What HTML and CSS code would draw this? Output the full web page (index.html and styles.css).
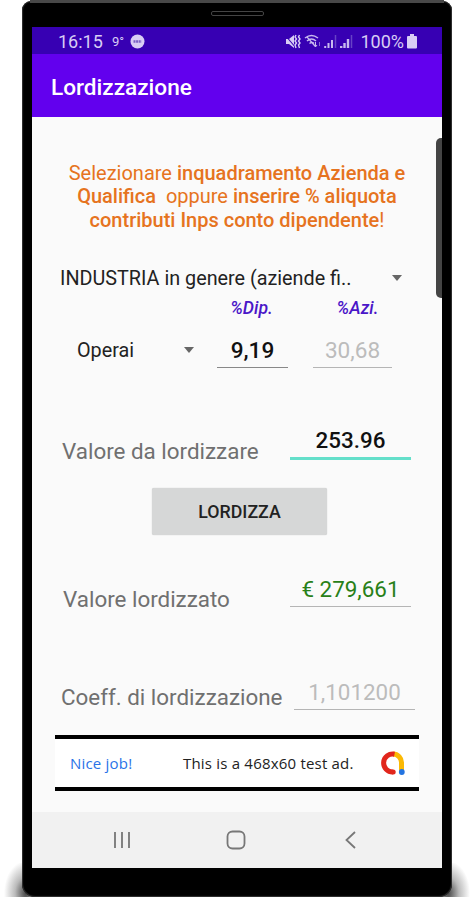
FILE: index.html
```html
<!DOCTYPE html>
<html lang="it">
<head>
<meta charset="UTF-8">
<meta name="viewport" content="width=device-width, initial-scale=1.0">
<title>Lordizzazione</title>
<link rel="stylesheet" href="styles.css">
</head>
<body>

<div class="phone">
  <div class="speaker"></div>
  <div class="side-panel"></div>
  <div class="screen">

    <!-- Barra di stato -->
    <div class="status-bar">
      <span class="time">16:15</span>
      <span class="temp">9°</span>
      <svg class="badge" width="15" height="15" viewBox="0 0 15 15">
        <circle cx="7.5" cy="7.5" r="7" fill="#d8cdf5"/>
        <path d="M3.5 7.5h8" stroke="#7960c5" stroke-width="2.4" stroke-dasharray="2 .6"/>
      </svg>
      <div class="status-icons">
        <svg width="16" height="15" viewBox="0 0 16 15">
          <path d="M1 5h3l5-4v13l-5-4H1z" fill="#d8cdf5"/>
          <path d="M0 1l11 13" stroke="#3700b3" stroke-width="1.1"/>
          <path d="M11 1l-1 2 1.5 2-1.5 2 1.5 2-1.5 2 1 3M14.5 1l-1 2 1.5 2-1.5 2 1.5 2-1.5 2 1 3" fill="none" stroke="#d8cdf5" stroke-width="1.4"/>
        </svg>
        <svg width="17" height="15" viewBox="0 0 17 15">
          <path d="M1 4Q7.5-1 14 4M3 7Q7.5 3 12 7M5.5 9.5Q8 7.5 10 9.5" fill="none" stroke="#c8b9ef" stroke-width="1.5"/>
          <path d="M3 3l8 9" stroke="#c8b9ef" stroke-width="1.2"/>
          <path d="M11.5 8v5m-1.5-2l1.5 2 1.5-2" fill="none" stroke="#c8b9ef"/>
          <path d="M15.5 12V8" stroke="#8a6dd6"/>
        </svg>
        <svg width="13" height="15" viewBox="0 0 13 15">
          <path d="M1.2 12v2M4.5 9v5M8 6v8" stroke="#c8b9ef" stroke-width="2"/>
          <path d="M11.5 1v13" stroke="#6742c6" stroke-width="1.5"/>
        </svg>
        <svg width="13" height="15" viewBox="0 0 13 15">
          <path d="M1.2 12v2M4.5 9v5M8 5v9" stroke="#c8b9ef" stroke-width="2.4"/>
          <path d="M11.5 1v13" stroke="#6742c6" stroke-width="1.5"/>
        </svg>
        <span class="battery-text">100%</span>
        <svg width="10" height="15" viewBox="0 0 10 15">
          <path d="M3 0h4v2h2q1 0 1 1v10.5q0 1-1 1H1q-1 0-1-1V3q0-1 1-1h2z" fill="#d8cdf5"/>
        </svg>
      </div>
    </div>

    <div class="app-bar"><span class="app-title">Lordizzazione</span></div>

    <div class="content">
      <div class="notice">
        <div>Selezionare <b>inquadramento Azienda e</b></div>
        <div><b>Qualifica</b>&nbsp; oppure <b>inserire % aliquota</b></div>
        <div><b>contributi Inps conto dipendente</b>!</div>
      </div>

      <div class="spinner sector">
        <span>INDUSTRIA in genere (aziende fi..</span>
        <span class="arrow"></span>
      </div>

      <div class="rates">
        <div class="spinner role">
          <span>Operai</span>
          <span class="arrow"></span>
        </div>
        <div class="rate dip">
          <span class="rate-label">%Dip.</span>
          <div class="field">9,19</div>
        </div>
        <div class="rate azi">
          <span class="rate-label">%Azi.</span>
          <div class="field">30,68</div>
        </div>
      </div>

      <div class="row amount">
        <span class="label">Valore da lordizzare</span>
        <div class="field">253.96</div>
      </div>

      <button class="submit-btn">LORDIZZA</button>

      <div class="row result">
        <span class="label">Valore lordizzato</span>
        <div class="field">€ 279,661</div>
      </div>

      <div class="row coeff">
        <span class="label">Coeff. di lordizzazione</span>
        <div class="field">1,101200</div>
      </div>

      <!-- Banner pubblicitario -->
      <div class="ad">
        <span class="ad-job">Nice job!</span>
        <span class="ad-text">This is a 468x60 test ad.</span>
        <svg class="ad-logo" width="26" height="26" viewBox="0 0 26 26" fill="none">
          <path d="M13 4a8.5 8.5 0 0 1 8.5 9v8" stroke="#fbb904" stroke-width="5"/>
          <path d="M14.5 4.2A9 9 0 1 0 13 22" stroke="#e1261c" stroke-width="5"/>
          <circle cx="13.2" cy="22" r="2.5" fill="#e1261c"/>
          <circle cx="21.8" cy="22" r="2.9" fill="#2374e1"/>
        </svg>
      </div>
    </div>

    <div class="nav-bar">
      <svg width="18" height="18" viewBox="0 0 18 18">
        <path d="M2 1v16M9 1v16M16 1v16" stroke="#777" stroke-width="1.8"/>
      </svg>
      <svg class="home" width="20" height="20" viewBox="0 0 20 20">
        <rect x="1.5" y="1.5" width="17" height="17" rx="5" fill="none" stroke="#777" stroke-width="1.8"/>
      </svg>
      <svg width="12" height="18" viewBox="0 0 12 18">
        <path d="M11 1L2.5 9l8.5 8" fill="none" stroke="#777" stroke-width="1.8"/>
      </svg>
    </div>
  </div>
</div>

</body>
</html>
```

FILE: styles.css
```css
* {
  box-sizing: border-box;
}
body {
  margin: 0;
  width: 473px;
  height: 900px;
  overflow: hidden;
  background-color: #fff;
  font-family: Roboto, "Liberation Sans", sans-serif;
  color: #222;
}
span {
  white-space: nowrap;
}
.phone {
  position: relative;
  width: 430px;
  height: 896px;
  margin: 1px 0 0 22px;
  padding: 26px 10px 0;
  background-color: #000;
  border-radius: 9px 9px 13px 13px;
  box-shadow: inset 0 0 1px 1px #333;
}
/* bordo superiore del telefono */
.phone::before {
  content: "";
  position: absolute;
  left: 8px;
  right: 8px;
  top: -1px;
  height: 3px;
  background-color: #484848;
}
/* ombra sotto gli angoli */
.phone::after {
  content: "";
  position: absolute;
  z-index: -1;
  left: -18px;
  right: -18px;
  bottom: 0;
  height: 34px;
  background: radial-gradient(ellipse 22px 32px at 22px 88%, #444, #bbb 50%, transparent) left / 50% 100% no-repeat,
    radial-gradient(ellipse 22px 32px at calc(100% - 22px) 88%, #444, #bbb 50%, transparent) right / 50% 100% no-repeat;
}
.speaker {
  position: absolute;
  left: 189px;
  top: 10px;
  width: 53px;
  height: 5px;
  border: 1px solid #444;
  border-radius: 2px;
}
.side-panel {
  position: absolute;
  z-index: 1;
  left: 414px;
  top: 137px;
  width: 6px;
  height: 160px;
  background-color: #444;
  border-radius: 5px 0 0 5px;
}
.screen {
  width: 410px;
  height: 841px;
  display: flex;
  flex-direction: column;
  background-color: #fafafa;
}
.status-bar {
  height: 27px;
  display: flex;
  align-items: center;
  padding: 1px 25px 0 26px;
  background-color: #3700b3;
  color: #d8cdf5;
}
.time {
  width: 54px;
  font-size: 18px;
}
.temp {
  width: 18px;
  font-size: 13px;
}
.status-icons {
  margin-left: auto;
  display: flex;
  align-items: center;
  gap: 3px;
}
.battery-text {
  margin-left: 4px;
  font-size: 18px;
}
.app-bar {
  height: 63px;
  display: flex;
  align-items: center;
  padding: 3px 0 0 19px;
  background-color: #6200ee;
  color: #fff;
  font-size: 22.6px;
  font-weight: 500;
}
.content {
  height: 695px;
  padding-top: 45px;
}
.notice {
  height: 69px;
  text-align: center;
  white-space: nowrap;
  font-size: 20px;
  line-height: 23.3px;
  color: #e67320;
}
.notice b {
  font-weight: 500;
}
.spinner {
  display: flex;
  align-items: center;
  justify-content: space-between;
}
.arrow {
  border: 5px solid transparent;
  border-top: 6px solid #666;
  border-bottom: 0;
}
.sector {
  height: 30px;
  margin: 32px 40px 0 28px;
  font-size: 19.8px;
}
.rates {
  display: flex;
  height: 75px;
}
.role {
  width: 117px;
  height: 30px;
  margin: 42px 0 0 45px;
  font-size: 19.8px;
}
.rate {
  display: flex;
  flex-direction: column;
}
.rate-label {
  height: 24px;
  line-height: 31px;
  font-size: 17.7px;
  font-weight: 500;
  font-style: italic;
  color: #4a16c8;
  text-align: center;
}
.dip {
  width: 71px;
  margin-left: 23px;
}
.dip .rate-label {
  padding-right: 2px;
}
.azi {
  width: 79px;
  margin-left: 25px;
}
.azi .rate-label {
  padding-left: 10px;
}
.field {
  text-align: center;
  border-bottom: 1px solid #b5b5b5;
}
.rate .field {
  height: 51px;
  padding-top: 15px;
  line-height: 38px;
  font-size: 22.6px;
}
.dip .field {
  font-weight: 500;
  color: #111;
  border-color: #888;
}
.azi .field {
  color: #bcbcbc;
}
.row {
  display: flex;
  justify-content: space-between;
  align-items: flex-end;
  height: 50px;
  font-size: 22.4px;
}
.label {
  height: 27px;
  line-height: 27px;
  color: #707070;
}
.row .field {
  width: 121px;
  height: 34px;
  line-height: 32px;
}
.amount {
  margin: 49px 31px 0 30px;
}
.amount .label {
  margin-bottom: 2px;
}
.amount .field {
  height: 36px;
  border-bottom: 3px solid #64dfca;
  font-weight: 500;
  color: #111;
  margin-bottom: 7px;
}
.submit-btn {
  display: block;
  width: 175px;
  height: 47px;
  margin: 21px 0 0 120px;
  padding: 0;
  border: 0;
  border-radius: 2px;
  background-color: #d6d7d7;
  color: #222;
  font-family: inherit;
  font-size: 17.8px;
  font-weight: 500;
  box-shadow: 0 0 1px #bbb;
}
.result {
  margin: 29px 31px 0 31px;
}
.result .label {
  margin-bottom: 1px;
}
.result .field {
  color: #288018;
  margin-bottom: 7px;
}
.coeff {
  margin: 47px 27px 0 29px;
}
.coeff .field {
  color: #bcbcbc;
  margin-bottom: 1px;
}
.ad {
  width: 364px;
  height: 56px;
  margin: 24px 0 0 23px;
  padding: 0 13px 0 15px;
  display: flex;
  align-items: center;
  border-top: 4px solid #000;
  border-bottom: 4px solid #000;
  background-color: #fff;
  font-family: "Open Sans", sans-serif;
  font-size: 15px;
  letter-spacing: 0.2px;
}
.ad-job {
  width: 113px;
  color: #2a73e8;
}
.ad-logo {
  margin-left: auto;
}
.nav-bar {
  height: 56px;
  display: flex;
  align-items: center;
  padding: 0 86px 0 81px;
  justify-content: space-between;
  background-color: #f1f1f1;
}
.home {
  margin-right: 3px;
}
```
